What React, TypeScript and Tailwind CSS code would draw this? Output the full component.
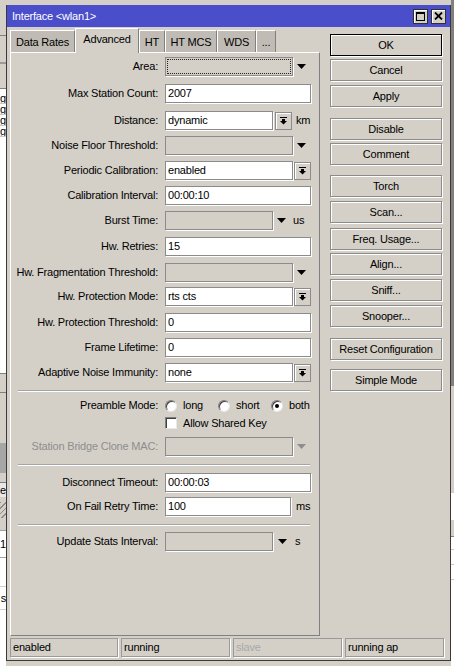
import React from "react";

type RowProps = { label: string; mt: string; children?: React.ReactNode; dim?: boolean };

function Row({ label, mt, children, dim }: RowProps) {
  return (
    <div className={`flex h-[19px] shrink-0 items-center ${mt}`}>
      <div className={`w-[147px] shrink-0 whitespace-nowrap text-right ${dim ? "text-[#8e8e8e]" : "text-black"}`}>{label}</div>
      <div className="ml-[7px] flex h-full items-center">{children}</div>
    </div>
  );
}

function Field({ w, value, gray, focus }: { w: string; value?: string; gray?: boolean; focus?: boolean }) {
  return (
    <div
      className={`${w} flex h-[19px] shrink-0 items-center border border-[#8b8b8b] shadow-[1px_1px_0_#ffffff] ${gray ? "bg-[#d4d0c8]" : "bg-white"} ${focus ? "p-[1px]" : "pl-[2px]"}`}
    >
      {focus ? <div className="h-full w-full border border-dotted border-[#222]" /> : value}
    </div>
  );
}

function Tri({ ml, gray }: { ml: string; gray?: boolean }) {
  return (
    <svg width="9" height="5" viewBox="0 0 9 5" className={`shrink-0 ${ml}`}>
      <polygon points="0,0 9,0 4.5,5" fill={gray ? "#8e8e8e" : "#000"} />
    </svg>
  );
}

function DropBtn({ ml }: { ml: string }) {
  return (
    <div className={`flex h-[18px] w-[17px] shrink-0 items-center justify-center border border-[#8b8b8b] bg-[#d4d0c8] shadow-[inset_1px_1px_0_#ffffff] ${ml}`}>
      <svg width="7" height="8" viewBox="0 0 7 8">
        <rect x="0" y="0" width="7" height="1" fill="#000" />
        <rect x="2" y="2" width="3" height="2" fill="#000" />
        <polygon points="0,4 7,4 3.5,7.5" fill="#000" />
      </svg>
    </div>
  );
}

function Unit({ ml, text }: { ml: string; text: string }) {
  return <span className={`shrink-0 ${ml}`}>{text}</span>;
}

function Sep({ mt }: { mt: string }) {
  return <div className={`ml-[7px] h-0 w-[292px] shrink-0 border-t border-b border-t-[#a4a4a4] border-b-white ${mt}`} />;
}

function Radio({ checked }: { checked?: boolean }) {
  return (
    <div className="flex h-[12px] w-[12px] shrink-0 items-center justify-center rounded-full border border-[#808080] border-b-[#e8e8e8] border-r-[#e8e8e8] bg-white shadow-[inset_1px_1px_0_#404040]">
      {checked ? <div className="h-[4px] w-[4px] rounded-full bg-black" /> : null}
    </div>
  );
}

function Btn({ label, mt, def }: { label: string; mt: string; def?: boolean }) {
  return (
    <div
      className={`flex h-[22px] shrink-0 items-center justify-center border shadow-[1px_1px_0_#ffffff,inset_1px_1px_0_#ffffff] ${def ? "border-black" : "border-[#8b8b8b]"} ${mt}`}
    >
      {label}
    </div>
  );
}

function Tab({ label, w, active }: { label: string; w: string; active?: boolean }) {
  return (
    <div
      className={`${w} flex shrink-0 justify-center border-t border-l border-r border-t-white border-l-white border-r-[#808080] ${
        active ? "relative z-10 mb-[-1px] h-[25px] bg-[#d4d0c8] pt-[5px]" : "h-[22px] bg-[#c0bcb5] pt-[6px]"
      }`}
    >
      {label}
    </div>
  );
}

function Cell({ w, text, dim }: { w: string; text: string; dim?: boolean }) {
  return (
    <div className={`${w} flex h-[19px] shrink-0 items-center border border-[#9a9a9a] pl-[2px] shadow-[1px_1px_0_#ffffff] ${dim ? "text-[#a8a8a8]" : "text-black"}`}>
      {text}
    </div>
  );
}

export default function App() {
  return (
    <div className="relative h-[666px] w-[454px] overflow-hidden bg-[#d4d0c8] font-['Liberation_Sans',Arial,sans-serif] text-[11px] leading-none tracking-[-0.2px] text-black">
      {/* background window, left edge */}
      <div className="absolute left-0 top-0 flex h-[666px] w-[6px] flex-col">
        <div className="h-[35px] bg-[#d4d0c8]" />
        <div className="h-[1px] bg-[#808080]" />
        <div className="h-[26px] bg-[#d4d0c8]" />
        <div className="h-[2px] bg-[#9a9a9a]" />
        <div className="h-[24px] bg-[#d4d0c8]" />
        <div className="h-[1px] bg-[#808080]" />
        <div className="h-[4px] bg-white" />
        <div className="flex h-[11px] items-center justify-end overflow-hidden border-b border-[#c8c8c8] bg-white">g</div>
        <div className="flex h-[11px] items-center justify-end overflow-hidden border-b border-[#c8c8c8] bg-white">g</div>
        <div className="flex h-[11px] items-center justify-end overflow-hidden border-b border-[#c8c8c8] bg-white">g</div>
        <div className="flex h-[11px] items-center justify-end overflow-hidden border-b border-[#c8c8c8] bg-white">g</div>
        <div className="h-[236px] bg-white" />
        <div className="h-[20px] border-t border-b border-[#808080] bg-[#d4d0c8]" />
        <div className="h-[50px] bg-[#d4d0c8]" />
        <div className="h-[30px] bg-[#a6a6a6]" />
        <div className="h-[10px] border-b border-[#808080] bg-[#d4d0c8]" />
        <div className="flex h-[14px] items-center justify-end overflow-hidden bg-[#e8e8e8]">e</div>
        <div className="h-[5px] bg-[#d4d0c8]" />
        <div className="h-[16px] bg-[repeating-linear-gradient(135deg,#8a8a8a_0_1px,#d4d0c8_1px_4px)]" />
        <div className="h-[12px] bg-[#d4d0c8]" />
        <div className="flex h-[28px] items-center justify-end overflow-hidden border-t border-b border-[#a0a0a0] bg-white">1</div>
        <div className="h-[29px] border-b border-[#d0d0d0] bg-white" />
        <div className="flex h-[23px] items-center justify-end overflow-hidden border-b border-[#d0d0d0] bg-white">s</div>
        <div className="flex-1 bg-white" />
      </div>

      {/* background window, right edge */}
      <div className="absolute left-[451px] top-0 flex h-[666px] w-[3px] flex-col">
        <div className="h-[386px] bg-[#808080]" />
        <div className="h-[107px] bg-[#d4d0c8]" />
        <div className="h-[27px] bg-white" />
        <div className="h-[17px] border-b border-[#808080] bg-[#d4d0c8]" />
        <div className="h-[13px] border-b border-[#c8c8c8] bg-white" />
        <div className="h-[15px] border-b border-[#c8c8c8] bg-white" />
        <div className="h-[15px] border-b border-[#c8c8c8] bg-white" />
        <div className="flex-1 bg-white" />
      </div>

      {/* main window */}
      <div className="absolute left-[6px] top-[5px] flex h-[656px] w-[445px] flex-col border-x border-b border-[#3a3a3a] bg-[#d4d0c8]">
        {/* title bar */}
        <div className="flex h-[22px] shrink-0 items-center justify-between bg-[#4a4ecb] pl-[5px] pr-[4px]">
          <span className="text-[11px] text-white">Interface &lt;wlan1&gt;</span>
          <div className="flex items-center gap-[3px]">
            <div className="flex h-[15px] w-[15px] items-center justify-center border border-[#303030] bg-[#d4d0c8] shadow-[inset_1px_1px_0_#ffffff]">
              <div className="h-[9px] w-[9px] border border-t-2 border-black" />
            </div>
            <div className="flex h-[15px] w-[15px] items-center justify-center border border-[#303030] bg-[#d4d0c8] shadow-[inset_1px_1px_0_#ffffff]">
              <svg width="9" height="8" viewBox="0 0 9 8">
                <path d="M1 0.5 L8 7.5 M8 0.5 L1 7.5" stroke="#000" strokeWidth="1.8" />
              </svg>
            </div>
          </div>
        </div>

        {/* body */}
        <div className="flex flex-1 flex-col pl-[3px] pr-[6px] pt-[1px] pb-[3px]">
          <div className="flex flex-1 gap-[10px]">
            {/* left column */}
            <div className="flex w-[310px] shrink-0 flex-col">
              <div className="flex h-[24px] shrink-0 items-end">
                <Tab label="Data Rates" w="w-[65px]" />
                <Tab label="Advanced" w="w-[64px]" active />
                <Tab label="HT" w="w-[26px]" />
                <Tab label="HT MCS" w="w-[52px]" />
                <Tab label="WDS" w="w-[39px]" />
                <Tab label="..." w="w-[20px]" />
              </div>
              <div className="flex h-[584px] shrink-0 flex-col border border-t-white border-l-white border-r-[#808080] border-b-[#808080]">
                <Row label="Area:" mt="mt-[4px]">
                  <Field w="w-[128px]" gray focus />
                  <Tri ml="ml-[4px]" />
                </Row>
                <Row label="Max Station Count:" mt="mt-[8px]">
                  <Field w="w-[146px]" value="2007" />
                </Row>
                <Row label="Distance:" mt="mt-[8px]">
                  <Field w="w-[108px]" value="dynamic" />
                  <DropBtn ml="ml-[2px]" />
                  <Unit ml="ml-[4px]" text="km" />
                </Row>
                <Row label="Noise Floor Threshold:" mt="mt-[6px]">
                  <Field w="w-[128px]" gray />
                  <Tri ml="ml-[4px]" />
                </Row>
                <Row label="Periodic Calibration:" mt="mt-[6px]">
                  <Field w="w-[128px]" value="enabled" />
                  <DropBtn ml="ml-[1px]" />
                </Row>
                <Row label="Calibration Interval:" mt="mt-[6px]">
                  <Field w="w-[146px]" value="00:00:10" />
                </Row>
                <Row label="Burst Time:" mt="mt-[6px]">
                  <Field w="w-[108px]" gray />
                  <Tri ml="ml-[4px]" />
                  <Unit ml="ml-[7px]" text="us" />
                </Row>
                <Row label="Hw. Retries:" mt="mt-[7px]">
                  <Field w="w-[146px]" value="15" />
                </Row>
                <Row label="Hw. Fragmentation Threshold:" mt="mt-[7px]">
                  <Field w="w-[128px]" gray />
                  <Tri ml="ml-[4px]" />
                </Row>
                <Row label="Hw. Protection Mode:" mt="mt-[5px]">
                  <Field w="w-[128px]" value="rts cts" />
                  <DropBtn ml="ml-[1px]" />
                </Row>
                <Row label="Hw. Protection Threshold:" mt="mt-[7px]">
                  <Field w="w-[146px]" value="0" />
                </Row>
                <Row label="Frame Lifetime:" mt="mt-[6px]">
                  <Field w="w-[146px]" value="0" />
                </Row>
                <Row label="Adaptive Noise Immunity:" mt="mt-[6px]">
                  <Field w="w-[128px]" value="none" />
                  <DropBtn ml="ml-[1px]" />
                </Row>

                <Sep mt="mt-[8px]" />

                <Row label="Preamble Mode:" mt="mt-[4px]">
                  <div className="flex w-[53px] items-center">
                    <Radio />
                    <span className="ml-[6px]">long</span>
                  </div>
                  <div className="flex w-[53px] items-center">
                    <Radio />
                    <span className="ml-[6px]">short</span>
                  </div>
                  <div className="flex items-center">
                    <Radio checked />
                    <span className="ml-[6px]">both</span>
                  </div>
                </Row>
                <div className="flex h-[16px] shrink-0 items-center pl-[154px]">
                  <div className="h-[12px] w-[12px] border border-[#808080] border-b-[#e8e8e8] border-r-[#e8e8e8] bg-white shadow-[inset_1px_1px_0_#404040]" />
                  <span className="ml-[6px]">Allow Shared Key</span>
                </div>
                <Row label="Station Bridge Clone MAC:" mt="mt-[6px]" dim>
                  <Field w="w-[128px]" gray />
                  <Tri ml="ml-[4px]" gray />
                </Row>

                <Sep mt="mt-[8px]" />

                <Row label="Disconnect Timeout:" mt="mt-[7px]">
                  <Field w="w-[146px]" value="00:00:03" />
                </Row>
                <Row label="On Fail Retry Time:" mt="mt-[5px]">
                  <Field w="w-[126px]" value="100" />
                  <Unit ml="ml-[5px]" text="ms" />
                </Row>

                <Sep mt="mt-[8px]" />

                <Row label="Update Stats Interval:" mt="mt-[6px]">
                  <Field w="w-[108px]" gray />
                  <Tri ml="ml-[5px]" />
                  <Unit ml="ml-[8px]" text="s" />
                </Row>
              </div>
            </div>

            {/* right column */}
            <div className="flex w-[112px] shrink-0 flex-col pt-[6px]">
              <Btn label="OK" mt="mt-0" def />
              <Btn label="Cancel" mt="mt-[3px]" />
              <Btn label="Apply" mt="mt-[4px]" />
              <Btn label="Disable" mt="mt-[11px]" />
              <Btn label="Comment" mt="mt-[3px]" />
              <Btn label="Torch" mt="mt-[10px]" />
              <Btn label="Scan..." mt="mt-[4px]" />
              <Btn label="Freq. Usage..." mt="mt-[5px]" />
              <Btn label="Align..." mt="mt-[3px]" />
              <Btn label="Sniff..." mt="mt-[4px]" />
              <Btn label="Snooper..." mt="mt-[4px]" />
              <Btn label="Reset Configuration" mt="mt-[11px]" />
              <Btn label="Simple Mode" mt="mt-[9px]" />
            </div>
          </div>

          {/* status bar */}
          <div className="mt-[2px] flex shrink-0 gap-[3px]">
            <Cell w="w-[108px]" text="enabled" />
            <Cell w="w-[109px]" text="running" />
            <Cell w="w-[109px]" text="slave" dim />
            <Cell w="w-[99px]" text="running ap" />
          </div>
        </div>
      </div>
    </div>
  );
}
